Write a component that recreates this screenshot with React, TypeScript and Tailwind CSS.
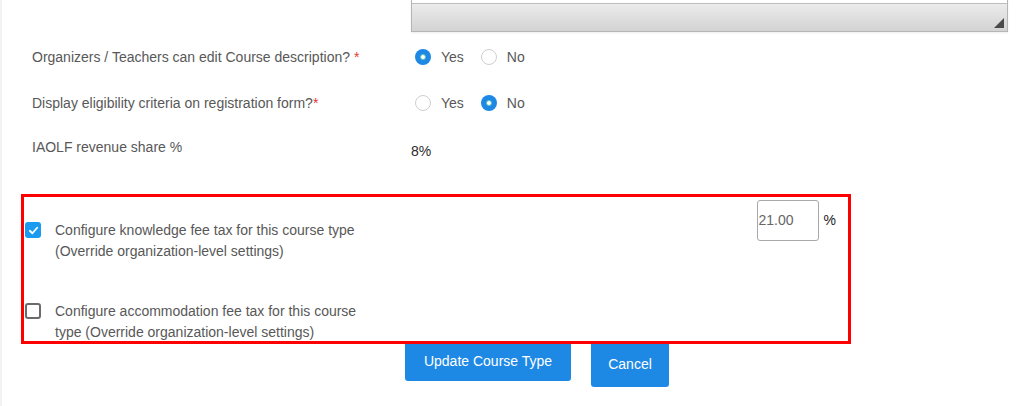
import React from "react";

const font = { fontFamily: '"Liberation Sans", Arial, sans-serif' };

function Radio({ checked }: { checked: boolean }) {
  return checked ? (
    <span className="flex h-[16px] w-[16px] shrink-0 items-center justify-center rounded-full bg-[#1e88e5]">
      <span className="h-[6px] w-[6px] rounded-full border border-[#5fc3b0] bg-white" />
    </span>
  ) : (
    <span className="block h-[16px] w-[16px] shrink-0 rounded-full border border-[#cfcfcf] bg-white" />
  );
}

function RadioGroup({ value }: { value: "yes" | "no" }) {
  return (
    <div className="flex items-center pl-[4px] text-[14px] text-[#585858]">
      <Radio checked={value === "yes"} />
      <span className="ml-[10px]">Yes</span>
      <span className="ml-[17px] flex">
        <Radio checked={value === "no"} />
      </span>
      <span className="ml-[10px]">No</span>
    </div>
  );
}

export default function App() {
  return (
    <div
      className="relative h-[406px] w-[1025px] overflow-hidden border-l-2 border-[#f2f2f2] bg-white"
      style={font}
    >
      {/* textarea remnant */}
      <div className="ml-[409px] flex h-[32px] w-[597px] flex-col border-x border-b border-[#b5b5b5] shadow-[0_1px_2px_rgba(0,0,0,0.08)]">
        <div className="h-[4px] border-b border-[#bdbdbd] bg-white" />
        <div className="relative flex-1 bg-gradient-to-b from-[#ebebeb] to-[#d3d3d3]">
          <svg
            className="absolute bottom-[3px] right-[3px]"
            width="10"
            height="10"
            viewBox="0 0 10 10"
          >
            <polygon points="10,0 10,10 0,10" fill="#4a4a4a" />
          </svg>
        </div>
      </div>

      {/* row 1 */}
      <div className="mt-[9px] flex h-[32px] items-center pl-[30px] text-[14px]">
        <div className="w-[379px] text-[#585858]">
          Organizers / Teachers can edit Course description? <span className="text-[#e53935]">*</span>
        </div>
        <RadioGroup value="yes" />
      </div>

      {/* row 2 */}
      <div className="mt-[14px] flex h-[32px] items-center pl-[30px] text-[14px]">
        <div className="w-[379px] text-[#585858]">
          Display eligibility criteria on registration form?<span className="text-[#e53935]">*</span>
        </div>
        <RadioGroup value="no" />
      </div>

      {/* row 3 */}
      <div className="mt-[18px] flex pl-[30px] text-[14px] leading-[20px]">
        <div className="w-[379px] text-[#585858]">IAOLF revenue share %</div>
        <div className="pt-[4px] text-[#2b2b2b]">8%</div>
      </div>

      {/* red highlighted box */}
      <div className="relative z-10 ml-[19px] mt-[33px] h-[150px] w-[830px] border-[3px] border-[#ff0000] pt-[3px] text-[14px] leading-[21px] text-[#585858]">
        <div className="flex items-start pr-[12px]">
          <div className="mt-[20px] flex">
            <div className="w-[31px] pl-[1px] pt-[2px]">
              <span className="flex h-[16px] w-[16px] items-center justify-center rounded-[3px] bg-[#1a9bf0]">
                <svg width="11" height="11" viewBox="0 0 12 12" fill="none">
                  <path
                    d="M2 6.3 L4.8 9 L10 3"
                    stroke="white"
                    strokeWidth="2"
                    strokeLinecap="round"
                    strokeLinejoin="round"
                  />
                </svg>
              </span>
            </div>
            <div className="w-[315px]">
              Configure knowledge fee tax for this course type (Override organization-level settings)
            </div>
          </div>
          <div className="ml-auto flex items-start">
            <div className="flex h-[41px] w-[62px] items-center rounded-[3px] border border-[#a8a8a8] pl-[1px] text-[14px] text-[#666]">
              21.00
            </div>
            <span className="ml-[5px] mt-[10px] text-[#222]">%</span>
          </div>
        </div>
        <div className="mt-[39px] flex">
          <div className="w-[31px] pl-[1px] pt-[2px]">
            <span className="block h-[16px] w-[16px] rounded-[3px] border-2 border-[#6b6b6b] bg-white" />
          </div>
          <div className="w-[315px]">
            Configure accommodation fee tax for this course type (Override organization-level settings)
          </div>
        </div>
      </div>

      {/* buttons */}
      <div className="-mt-[3px] flex items-start pl-[403px] text-[14px] text-white">
        <button className="flex h-[40px] w-[166px] items-center justify-center rounded-[3px] bg-[#1e88e5]">
          Update Course Type
        </button>
        <button className="ml-[20px] flex h-[46px] w-[78px] items-center justify-center rounded-[3px] bg-[#1e88e5]">
          Cancel
        </button>
      </div>
    </div>
  );
}
